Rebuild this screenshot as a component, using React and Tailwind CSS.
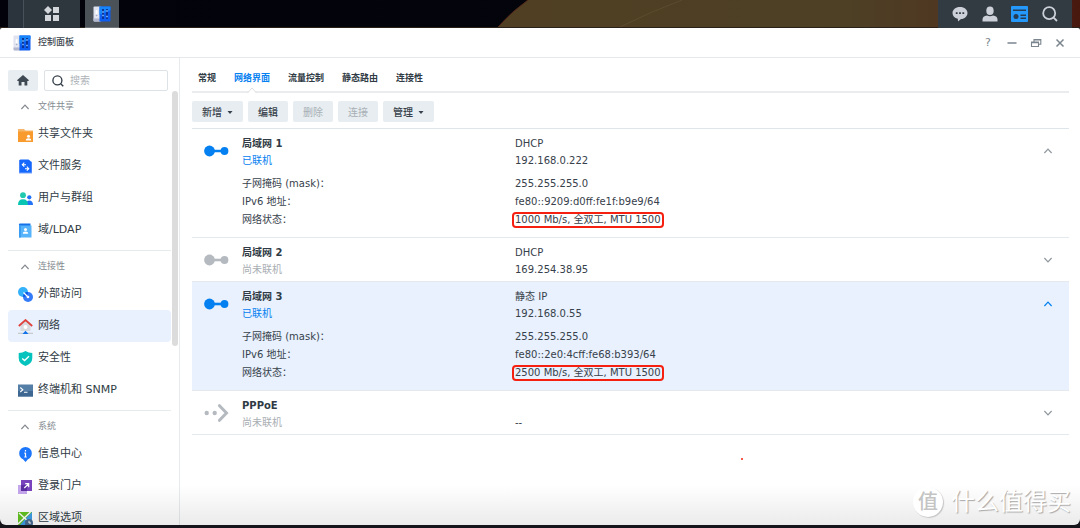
import React, { useState } from 'react';

const WallpaperStrip = () => (
  <svg className="absolute inset-0 h-full w-full" viewBox="0 0 1080 28" preserveAspectRatio="none" aria-hidden="true">
    <defs>
      <linearGradient id="sand" x1="0" x2="1" y1="0" y2="0">
        <stop offset="0" stopColor="#503f23" />
        <stop offset="0.6" stopColor="#4d4025" />
        <stop offset="0.8" stopColor="#503521" />
        <stop offset="1" stopColor="#48180f" />
      </linearGradient>
      <linearGradient id="night" x1="0" x2="1" y1="0" y2="0">
        <stop offset="0" stopColor="#02030a" />
        <stop offset="0.8" stopColor="#04060c" />
        <stop offset="1" stopColor="#0b1116" />
      </linearGradient>
    </defs>
    <rect width="1080" height="28" fill="url(#night)" />
    <path d="M528 0 Q512 11 497 28 H1080 V0 Z" fill="url(#sand)" />
    <path d="M528 0 Q512 11 497 28" stroke="#522719" strokeWidth="1" fill="none" />
    <path d="M620 27 Q650 12 682 0" stroke="#5c4b2e" strokeWidth="1" fill="none" />
    <path d="M0 27.5 H1080" stroke="#2a2218" strokeWidth="1" />
  </svg>
);

const PanelIcon = () => (
  <svg width="18" height="16" viewBox="0 0 18 16" aria-hidden="true">
    <rect x="0.5" y="0.5" width="8" height="15" rx="1" fill="#dfe2ef" />
    <path d="M0.5 12.5 H7 V15.5 H1.5 Q0.5 15.5 0.5 14.5Z" fill="#b3b8d1" />
    <rect x="2.6" y="4" width="2" height="7.5" rx="1" fill="#fff" />
    <circle cx="3.6" cy="9.6" r="1" fill="#a9afc9" />
    <path d="M6.5 0.5 H16.5 Q17.5 0.5 17.5 1.5 V14.5 Q17.5 15.5 16.5 15.5 H6.5Z" fill="#0d5df0" />
    <path d="M6.5 0.5 H17.5 V4 L6.5 9Z" fill="#1684fa" />
    <path d="M10 3 V13 M14 3 V13" stroke="#0a2f8c" strokeWidth="1.8" />
    <path d="M9.1 6 H10.9 M9.1 9.5 H10.9 M13.1 5 H14.9 M13.1 10.5 H14.9" stroke="#6fb0ff" strokeWidth="1.4" />
  </svg>
);

const HomeIcon = () => (
  <svg width="12" height="11" viewBox="0 0 12 11" fill="#3f4953" aria-hidden="true">
    <path d="M6 0 L12 5.3 L11.3 6 H10.3 V10.5 H7.5 V7 H4.5 V10.5 H1.7 V6 H0.7 L0 5.3Z" />
  </svg>
);

const SearchIcon = ({ size, color, width }) => (
  <svg className="shrink-0" width={size} height={size} viewBox="0 0 16 16" fill="none" stroke={color} strokeWidth={width} aria-hidden="true">
    <circle cx="7.2" cy="7.2" r="6" />
    <path d="M11.6 11.6 L15 15" />
  </svg>
);

const Chevron = ({ up, color }) => (
  <svg width="10" height="6" viewBox="0 0 10 6" fill="none" stroke={color} strokeWidth="1.2" aria-hidden="true">
    <path d={up ? 'M1.4 5 L5 1.2 L8.6 5' : 'M1.4 1 L5 4.8 L8.6 1'} />
  </svg>
);

const ICONS = {
  folder: (
    <>
      <path d="M0 2 H6 L7.5 3.5 H15 V6 H0Z" fill="#f5b66a" />
      <path d="M0 4.5 H15 V15 H0Z" fill="#f99a2c" />
      <circle cx="10.5" cy="9.2" r="1.5" fill="#fff" />
      <path d="M7.8 13.5 Q7.8 11.2 10.5 11.2 Q13.2 11.2 13.2 13.5Z" fill="#fff" />
    </>
  ),
  fileService: (
    <>
      <path d="M1 1 H11 L14 3 V14.5 H1Z" fill="#7ba6fa" />
      <path d="M2.5 0.5 H10.5 L13.5 3.2 V13.5 H1.5 V1Z" fill="#1568fb" />
      <path d="M6.3 3.7 L4.3 5.7 L6.3 7.7 M4.4 5.7 H8 M8.8 7.7 L10.8 9.7 L8.8 11.7 M10.7 9.7 H7" stroke="#fff" strokeWidth="1.1" fill="none" />
    </>
  ),
  users: (
    <>
      <circle cx="5" cy="4.2" r="2.9" fill="#21c9ae" />
      <circle cx="11.3" cy="6.3" r="2.1" fill="#2273f5" />
      <path d="M8 14 Q8 9.4 11.3 9.4 Q15 9.4 15 14Z" fill="#2273f5" />
      <path d="M0 14 Q0 8.2 5 8.2 Q10 8.2 10 14Z" fill="#08c4b2" />
    </>
  ),
  ldap: (
    <>
      <path d="M1 1.5 Q1 0.5 2 0.5 H12.5 V3 H1Z" fill="#1672e8" />
      <path d="M1 2.5 H13.5 V14.5 H1Z" fill="#57b4fb" />
      <path d="M1 2.5 H3 V14.5 H1Z" fill="#3c9ef2" />
      <circle cx="7.5" cy="6.5" r="1.5" fill="#fff" />
      <path d="M4.8 10.8 Q4.8 8.6 7.5 8.6 Q10.2 8.6 10.2 10.8Z" fill="#fff" />
    </>
  ),
  external: (
    <>
      <circle cx="5" cy="5" r="5" fill="#33b1fb" />
      <circle cx="10" cy="10" r="5" fill="#347bfa" />
      <path d="M5.2 8.7 A5 5 0 0 1 9.9 5 A5 5 0 0 1 5.2 9.9Z" fill="#0b54e0" />
      <circle cx="10" cy="10" r="1.3" fill="#fff" />
      <path d="M5.5 5.5 L10 10" stroke="#fff" strokeWidth="1.2" />
    </>
  ),
  network: (
    <>
      <path d="M2.5 6 L7.5 1.5 L12.5 6 V12 H2.5Z" fill="#d8dadd" />
      <circle cx="7.5" cy="8" r="2" fill="#fff" />
      <path d="M0.8 7 L7.5 1 L14.2 7" stroke="#e0413a" strokeWidth="1.7" fill="none" />
      <path d="M0 14.3 H15" stroke="#c3c8cf" strokeWidth="1.2" />
      <path d="M7.5 11.8 L10.5 15 H4.5Z" fill="#1272ec" />
    </>
  ),
  security: (
    <>
      <path d="M7.5 0 Q10.5 2 14.3 2 V7 Q14.3 12.5 7.5 15 Q0.7 12.5 0.7 7 V2 Q4.5 2 7.5 0Z" fill="#06c3bd" />
      <path d="M4.2 7.4 L6.6 9.6 L11 5.2" stroke="#fff" strokeWidth="1.4" fill="none" />
    </>
  ),
  terminal: (
    <>
      <rect y="1.5" width="15" height="12" fill="#557ea6" />
      <path d="M0 8 H15 V13.5 H0Z" fill="#3d6690" />
      <path d="M2.3 4.5 L4.8 6.8 L2.3 9 M6 9.3 H9.5" stroke="#fff" strokeWidth="1.1" fill="none" />
    </>
  ),
  info: (
    <>
      <path d="M7.5 0 A6.3 6.3 0 0 1 13.8 6.3 Q13.8 10.5 10 12.3 L7.5 15 L5 12.3 Q1.2 10.5 1.2 6.3 A6.3 6.3 0 0 1 7.5 0Z" fill="#1c76fb" />
      <path d="M7.5 3 V4.5 M7.5 5.8 V10.2 M6.3 10 H8.7 M6.3 6.2 H7.5" stroke="#fff" strokeWidth="1.2" />
    </>
  ),
  portal: (
    <>
      <rect y="6" width="9" height="9" fill="#c5a6ed" />
      <rect x="3" y="1" width="11" height="11" fill="#7843bd" />
      <path d="M3 6 H9 V12 H3Z" fill="#5b2da2" />
      <path d="M6.3 9 L10.5 4.8 M7.2 4.6 H10.7 V8.2" stroke="#fff" strokeWidth="1.2" fill="none" />
    </>
  ),
  region: (
    <>
      <path d="M0 1 H14 V14 H0Z" fill="#63c421" />
      <path d="M14 1 V14 H2 L8 7Z" fill="#3f9ee8" />
      <path d="M0 13 L12.5 1 M1 2 L12 12" stroke="#fff" strokeWidth="1.4" />
      <circle cx="11" cy="12" r="4" fill="#486b91" />
      <path d="M11 9.8 V12 H13" stroke="#fff" strokeWidth="1" fill="none" />
    </>
  ),
};

const SECTIONS = [
  {
    title: '文件共享',
    items: [
      { icon: 'folder', label: '共享文件夹' },
      { icon: 'fileService', label: '文件服务' },
      { icon: 'users', label: '用户与群组' },
      { icon: 'ldap', label: '域/LDAP' },
    ],
  },
  {
    title: '连接性',
    items: [
      { icon: 'external', label: '外部访问' },
      { icon: 'network', label: '网络' },
      { icon: 'security', label: '安全性' },
      { icon: 'terminal', label: '终端机和 SNMP' },
    ],
  },
  {
    title: '系统',
    items: [
      { icon: 'info', label: '信息中心' },
      { icon: 'portal', label: '登录门户' },
      { icon: 'region', label: '区域选项' },
    ],
  },
];

const TABS = ['常规', '网络界面', '流量控制', '静态路由', '连接性'];

const ACTIONS = [
  { label: '新增', menu: true },
  { label: '编辑' },
  { label: '删除', disabled: true },
  { label: '连接', disabled: true },
  { label: '管理', menu: true },
];

const INTERFACES = [
  {
    name: '局域网 1', online: true, type: 'DHCP', ip: '192.168.0.222',
    details: { mask: '255.255.255.0', ipv6: 'fe80::9209:d0ff:fe1f:b9e9/64', status: '1000 Mb/s, 全双工, MTU 1500' },
  },
  { name: '局域网 2', online: false, type: 'DHCP', ip: '169.254.38.95' },
  {
    name: '局域网 3', online: true, type: '静态 IP', ip: '192.168.0.55', selected: true,
    details: { mask: '255.255.255.0', ipv6: 'fe80::2e0:4cff:fe68:b393/64', status: '2500 Mb/s, 全双工, MTU 1500' },
  },
  { name: 'PPPoE', online: false, type: '', ip: '--', dial: true },
];

const LinkIcon = ({ online, dial }) => {
  const color = online ? '#0580f0' : '#b4babf';
  if (dial) {
    return (
      <svg width="26" height="18" viewBox="0 0 26 18" aria-hidden="true">
        <circle cx="2.7" cy="9" r="2.2" fill={color} />
        <circle cx="10.7" cy="9" r="2.2" fill={color} />
        <path d="M15.5 1.7 L22.5 9 L15.5 16.3" stroke={color} strokeWidth="3" strokeLinecap="round" fill="none" />
      </svg>
    );
  }
  return (
    <svg width="26" height="18" viewBox="0 0 26 18" aria-hidden="true">
      <path d="M5 9 H20" stroke={color} strokeWidth="2.6" />
      <circle cx="5.5" cy="9" r="5.4" fill={color} />
      <circle cx="20.5" cy="9" r="3.9" fill={color} />
    </svg>
  );
};

const Taskbar = () => (
  <header className="relative flex h-7 shrink-0 justify-between">
    <WallpaperStrip />
    <div className="relative flex pl-2">
      <div className="w-[15px] bg-[#2b343c]" />
      <button aria-label="主菜单" className="flex w-[57px] items-center justify-center border-l border-[#48515a] bg-[#2e363e]">
        <svg width="16" height="16" viewBox="0 0 16 16" fill="#d3d6da" aria-hidden="true">
          <path d="M4 0 L8 4 L4 8 L0 4Z" />
          <rect x="9" y="1" width="6" height="6" />
          <rect x="1" y="9" width="6" height="6" />
          <rect x="9" y="9" width="6" height="6" />
        </svg>
      </button>
      <button aria-label="控制面板" className="ml-[5px] flex w-[34px] items-center justify-center border-b border-[#70767c] bg-[#4b5258]">
        <PanelIcon />
      </button>
    </div>
    <div className="relative mr-2 flex w-[134px] items-center justify-around bg-[#323a42] px-[7px]">
      <button aria-label="消息">
        <svg width="16" height="16" viewBox="0 0 16 16" fill="#ccd0d8" aria-hidden="true">
          <path d="M8 1 C12.5 1 15.5 3.7 15.5 7 C15.5 10.3 12.5 13 9 13 L6 15.5 L5.8 12.7 C2.5 12 0.5 9.8 0.5 7 C0.5 3.7 3.5 1 8 1Z" />
          <path d="M3.8 6.2 H5.6 V8 H3.8Z M7.1 6.2 H8.9 V8 H7.1Z M10.4 6.2 H12.2 V8 H10.4Z" fill="#323a42" />
        </svg>
      </button>
      <button aria-label="用户">
        <svg width="16" height="16" viewBox="0 0 16 16" fill="#ccd0d8" aria-hidden="true">
          <ellipse cx="8" cy="4.8" rx="3.7" ry="4.3" />
          <path d="M0.5 15.5 V13.5 Q0.5 10 5 9.5 Q8 11 11 9.5 Q15.5 10 15.5 13.5 V15.5Z" />
        </svg>
      </button>
      <button aria-label="小工具">
        <svg width="17" height="16" viewBox="0 0 17 16" aria-hidden="true">
          <rect width="17" height="16" rx="1" fill="#2598fb" />
          <path d="M2 4.3 H15 M9.5 9.3 H15 M9.5 12.3 H15" stroke="#263c55" strokeWidth="1.5" />
          <circle cx="5" cy="10.5" r="2.5" fill="#263c55" />
        </svg>
      </button>
      <button aria-label="搜索">
        <SearchIcon size={16} color="#ccd0d8" width={1.8} />
      </button>
    </div>
  </header>
);

const TitleBar = () => (
  <div className="flex h-[30px] shrink-0 items-center justify-between border-b border-[#e6e9eb] pr-[14px] pl-[13px]">
    <div className="flex items-center gap-[7px]">
      <PanelIcon />
      <h1 className="pt-px text-[9px] font-medium text-[#3a444e]">控制面板</h1>
    </div>
    <div className="flex items-center gap-[12px] text-[#7b858e]">
      <button aria-label="帮助" className="w-3 text-[11px] leading-3 font-medium">?</button>
      <button aria-label="最小化">
        <svg width="12" height="12" viewBox="0 0 12 12" stroke="currentColor" strokeWidth="1.3" aria-hidden="true">
          <path d="M1.5 6 H10.5" />
        </svg>
      </button>
      <button aria-label="还原">
        <svg width="12" height="12" viewBox="0 0 12 12" fill="none" stroke="currentColor" strokeWidth="1.1" aria-hidden="true">
          <path d="M1.5 5 H8.5 V9.5 H1.5Z M1.5 5.6 H8.5 M4 4.6 V2.5 H10.8 V7.2 H9 M4 3 H10.8" />
        </svg>
      </button>
      <button aria-label="关闭">
        <svg width="12" height="12" viewBox="0 0 12 12" stroke="currentColor" strokeWidth="1.5" aria-hidden="true">
          <path d="M2.5 2.5 L9.5 9.5 M9.5 2.5 L2.5 9.5" />
        </svg>
      </button>
    </div>
  </div>
);

const Sidebar = ({ active, onSelect }) => (
  <aside className="flex w-[180px] shrink-0 flex-col border-r border-[#e6ebee] pt-3">
    <div className="flex h-[21px] shrink-0 gap-[6px] pr-[11px] pl-2">
      <button aria-label="主页" className="flex w-[30px] items-center justify-center rounded-xs bg-[#e7edf0]">
        <HomeIcon />
      </button>
      <label className="flex min-w-0 flex-1 items-center gap-[6px] rounded-xs border border-[#dce2e6] pl-[7px]">
        <SearchIcon size={12} color="#333d47" width={1.8} />
        <input
          type="text"
          placeholder="搜索"
          aria-label="搜索"
          className="w-full min-w-0 text-[10px] outline-none placeholder:text-[#aeb3b8]"
        />
      </label>
    </div>
    <div className="flex min-h-0 flex-1">
      <nav className="min-w-0 flex-1 overflow-hidden pl-2">
        {SECTIONS.map(section => (
          <section key={section.title} className="border-b border-[#e6ebee] pt-1 pb-1 last:border-b-0">
            <button className="flex h-[23px] w-full items-center gap-2 pl-3 text-[9px] text-[#858b91]">
              <Chevron up color="#858b91" />
              {section.title}
            </button>
            {section.items.map(item => (
              <a
                key={item.label}
                href="#"
                onClick={() => onSelect(item.label)}
                className={`flex h-8 items-center gap-[5px] rounded-sm pl-[10px] text-[11px] text-[#303b45] ${
                  item.label === active ? 'bg-[#e8f1fd]' : ''
                }`}
              >
                <svg className="shrink-0" width="15" height="15" viewBox="0 0 15 15" aria-hidden="true">
                  {ICONS[item.icon]}
                </svg>
                <span className="pt-px">{item.label}</span>
              </a>
            ))}
          </section>
        ))}
      </nav>
      <div className="w-2 pl-px">
        <div className="h-[255px] w-[6px] rounded-full bg-[#dcdcdc]" />
      </div>
    </div>
  </aside>
);

const InterfaceRow = ({ item }) => {
  const { details } = item;
  return (
    <li
      className={`grid grid-cols-[50px_273px_1fr_42px] border-b border-[#e3e9ed] pt-[6px] text-[10px] leading-[17px] text-[#37414b] ${
        item.selected ? 'bg-[#e8f1fd]' : ''
      } ${details ? 'pb-2' : 'pb-[3px]'}`}
    >
      <div className="pt-[7px] pl-3">
        <LinkIcon online={item.online} dial={item.dial} />
      </div>
      <div>
        <h2 className="font-bold text-[#303b45]">{item.name}</h2>
        <p className={item.online ? 'text-[#0580f0]' : 'text-[#a9aeb3]'}>{item.online ? '已联机' : '尚未联机'}</p>
      </div>
      <div>
        <p className="min-h-[17px]">{item.type}</p>
        <p>{item.ip}</p>
      </div>
      <button aria-label={details ? '收起' : '展开'} className="flex h-8 items-center justify-center">
        <Chevron up={!!details} color={item.selected ? '#0580f0' : '#8f979e'} />
      </button>
      {details && (
        <dl className="col-span-2 col-start-2 mt-[6px] grid grid-cols-[273px_1fr] leading-[18px]">
          <dt>子网掩码 (mask)：</dt>
          <dd>{details.mask}</dd>
          <dt>IPv6 地址：</dt>
          <dd>{details.ipv6}</dd>
          <dt>网络状态：</dt>
          <dd className="flex items-center">
            <span className="-mx-[3px] rounded-sm border-2 border-[#f5200f] px-px leading-3">{details.status}</span>
          </dd>
        </dl>
      )}
    </li>
  );
};

const Watermark = () => (
  <div className="pointer-events-none absolute right-[9px] bottom-[8px] flex items-center gap-2 text-white [text-shadow:1px_1px_1px_#a8a8a8]">
    <span className="flex size-[30px] items-center justify-center rounded-full bg-white text-[20px] leading-none font-medium text-[#c4c4c4] shadow-[1px_1px_1px_#c4c4c4] [text-shadow:none]">
      值
    </span>
    <span className="text-[24px] leading-[30px]">什么值得买</span>
  </div>
);

const App = () => {
  const [page, setPage] = useState('网络');
  const [tab, setTab] = useState('网络界面');

  return (
    <div className="flex h-screen flex-col overflow-hidden bg-[#14141a] pb-[3px] font-['DejaVu_Sans','Noto_Sans_CJK_SC',sans-serif]" lang="zh-CN">
      <Taskbar />
      <div className="relative flex min-h-0 flex-1 flex-col overflow-hidden rounded-t-[2px] rounded-b-[6px] bg-white">
        <TitleBar />
        <div className="flex min-h-0 flex-1">
          <Sidebar active={page} onSelect={setPage} />
          <main className="min-w-0 flex-1 pr-[11px] pl-3">
            {/* Tabs */}
            <div role="tablist" className="flex h-[35px] gap-[18px] border-b-2 border-[#eaecee] pt-[9px] pl-[6px] text-[9px] font-bold">
              {TABS.map(name => (
                <button
                  key={name}
                  role="tab"
                  aria-selected={name === tab}
                  onClick={() => setTab(name)}
                  className={`relative ${name === tab ? 'text-[#0580f0]' : 'text-[#303b45]'}`}
                >
                  {name}
                  {name === tab && (
                    <svg className="absolute inset-x-0 -bottom-[2px] mx-auto" width="10" height="6" viewBox="0 0 10 6" aria-hidden="true">
                      <path d="M0.5 6 L5 1 L9.5 6" fill="#fff" stroke="#dcdfe2" strokeWidth="1" />
                    </svg>
                  )}
                </button>
              ))}
            </div>

            {/* Toolbar */}
            <div className="flex gap-[5px] border-b border-[#dfe6eb] pt-2 pb-[6px]">
              {ACTIONS.map(action => (
                <button
                  key={action.label}
                  disabled={action.disabled}
                  className="flex h-[21px] items-center gap-[5px] rounded-xs bg-[#e7edf0] px-[10px] pt-px text-[10px] font-medium text-[#37414b] disabled:font-normal disabled:text-[#a9b0b6]"
                >
                  {action.label}
                  {action.menu && (
                    <svg width="6" height="3" viewBox="0 0 6 3" fill="currentColor" aria-hidden="true">
                      <path d="M0.5 0 H5.5 L3 3Z" />
                    </svg>
                  )}
                </button>
              ))}
            </div>

            <ul>
              {INTERFACES.map(item => (
                <InterfaceRow key={item.name} item={item} />
              ))}
            </ul>
          </main>
        </div>
        <div className="pointer-events-none absolute inset-x-0 bottom-0 h-10 bg-linear-to-b from-black/0 to-black/8" />
        <div className="absolute top-[430px] left-[741px] size-[2px] rounded-full bg-[#f5200f]" />
        <Watermark />
      </div>
    </div>
  );
};

export default App;
